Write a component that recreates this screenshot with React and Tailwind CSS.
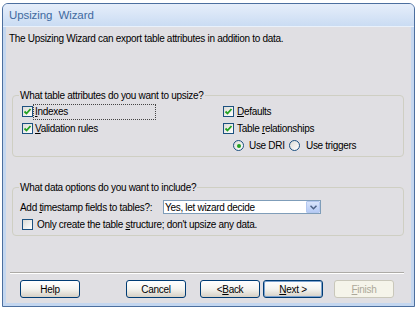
import React from "react";

function Check({ checked }) {
    return (
        <span className="w-[11px] h-[11px] shrink-0 border border-[#1c5180] bg-gradient-to-br from-[#dcdcd6] to-white flex items-center justify-center">
            {checked && (
                <svg width="9" height="9" viewBox="0 0 9 9">
                    <path d="M1.5 4.5 L3.5 6.5 L7.5 2" fill="none" stroke="#21a121" strokeWidth="1.8" />
                </svg>
            )}
        </span>
    );
}

function Radio({ checked }) {
    return (
        <span className="w-[11px] h-[11px] shrink-0 rounded-full border border-[#1c5180] bg-gradient-to-br from-[#dcdcd6] to-white flex items-center justify-center">
            {checked && <span className="w-[4px] h-[4px] rounded-full bg-[#21a121]" />}
        </span>
    );
}

function Btn({ children, variant }) {
    let cls = "border-[#003c74] bg-gradient-to-b from-white via-[#f4f4f0] to-[#d6d0c5] text-black";
    if (variant === "default") cls = "border-[#003c74] bg-gradient-to-b from-white via-[#f4f4f0] to-[#d6d0c5] text-black ring-1 ring-inset ring-[#7da2ce]";
    if (variant === "disabled") cls = "border-[#c9c7ba] bg-[#f5f4ea] text-[#aca899]";
    return (
        <div className={"w-[60px] h-[18px] shrink-0 rounded-[3px] border flex items-center justify-center " + cls}>
            {children}
        </div>
    );
}

export default function App() {
    return (
        <div className="w-[417px] h-[311px] bg-white pt-[3px] px-[2px] pb-[4px] text-[10px] leading-[13px] tracking-[-0.3px] text-black whitespace-nowrap" style={{ fontFamily: '"Liberation Sans", Arial, sans-serif' }}>
            <div className="h-full flex flex-col rounded-t-[6px] border border-[#4c6f9f] bg-[#c4d7f0]">
                <div className="h-[23px] shrink-0 rounded-t-[5px] bg-gradient-to-b from-[#e6eefa] to-[#cadcf3] border-b border-[#e9f1fb] flex items-center pl-[6px] text-[11.5px] tracking-[-0.1px] text-[#3f6aa0] whitespace-pre">
                    Upsizing  Wizard
                </div>
                <div className="flex-1 mx-[3px] mb-[3px] bg-[#e0dfe3] flex flex-col">
                    <div className="mt-[5px] ml-[3px]">The Upsizing Wizard can export table attributes in addition to data.</div>

                    {/* table attributes */}
                    <fieldset className="mt-[44px] ml-[6px] w-[392px] h-[68px] border border-[#cfcfc3] rounded-[4px] pl-[9px] pb-[2px]">
                        <legend className="-ml-[3px] px-[1px]">What table attributes do you want to upsize?</legend>
                        <div className="grid grid-cols-[201px_1fr] grid-rows-[17px_17px_17px] mt-[1px]">
                            <div className="flex items-center">
                                <Check checked />
                                <span className="w-[123px] h-[16px] border border-dotted border-[#444] px-[1px] flex items-center"><u>I</u>ndexes</span>
                            </div>
                            <div className="flex items-center">
                                <Check checked />
                                <span className="ml-[3px]"><u>D</u>efaults</span>
                            </div>
                            <div className="flex items-center">
                                <Check checked />
                                <span className="ml-[2px]"><u>V</u>alidation rules</span>
                            </div>
                            <div className="flex items-center">
                                <Check checked />
                                <span className="ml-[3px]">Table <u>r</u>elationships</span>
                            </div>
                            <div />
                            <div className="flex items-center pl-[10px]">
                                <Radio checked />
                                <span className="ml-[5px] w-[40px] shrink-0">Use DRI</span>
                                <Radio />
                                <span className="ml-[6px]">Use triggers</span>
                            </div>
                        </div>
                    </fieldset>

                    {/* data options */}
                    <fieldset className="mt-[24px] ml-[6px] w-[392px] h-[55px] border border-[#cfcfc3] rounded-[4px] pl-[7px]">
                        <legend className="-ml-[1px] px-[1px]">What data options do you want to include?</legend>
                        <div className="mt-[6px] h-[14px] flex items-center">
                            <span className="w-[143px]">Add <u>t</u>imestamp fields to tables?:</span>
                            <div className="w-[158px] h-[14px] border border-[#7f9db9] bg-white flex items-center">
                                <span className="flex-1 pl-[1px]">Yes, let wizard decide</span>
                                <span className="w-[14px] h-[12px] rounded-[1px] border border-[#b4c8f0] bg-gradient-to-b from-[#d8e4fb] to-[#b6cbf5] flex items-center justify-center">
                                    <svg width="7" height="5" viewBox="0 0 7 5">
                                        <path d="M0.5 0.8 L3.5 3.8 L6.5 0.8" fill="none" stroke="#4d6185" strokeWidth="1.5" />
                                    </svg>
                                </span>
                            </div>
                        </div>
                        <div className="h-[16px] mt-[2px] flex items-center pl-[2px]">
                            <Check />
                            <span className="ml-[4px]">Only create the table <u>s</u>tructure; don't upsize any data.</span>
                        </div>
                    </fieldset>

                    <div className="mt-[36px] ml-[4px] w-[394px] h-[2px] border-t border-[#acaaa6] border-b border-b-white" />

                    <div className="mt-[6px] flex">
                        <div className="ml-[14px]"><Btn>Help</Btn></div>
                        <div className="ml-[46px]"><Btn>Cancel</Btn></div>
                        <div className="ml-[14px]"><Btn>&lt; <u>B</u>ack</Btn></div>
                        <div className="ml-[3px]"><Btn variant="default"><u>N</u>ext &gt;</Btn></div>
                        <div className="ml-[11px]"><Btn variant="disabled"><u>F</u>inish</Btn></div>
                    </div>
                </div>
            </div>
        </div>
    );
}
